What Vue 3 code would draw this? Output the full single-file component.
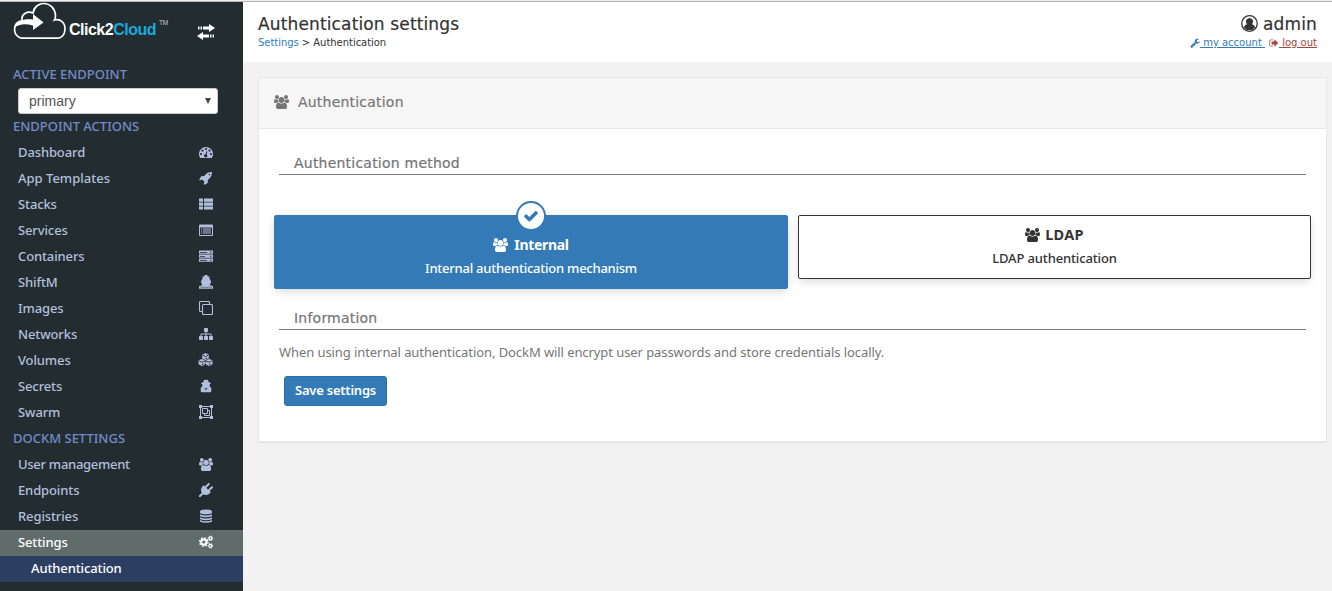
<script setup>
import { h } from 'vue'

const shapes = {
  users: '<path transform="scale(.0078125)" d="M593 896q-162 5-265 128h-134q-82 0-138-40.500t-56-118.500q0-353 124-353 6 0 43.500 21t97.500 42.500 119 21.500q67 0 133-23-5 37-5 66 0 139 81 256zm1071 637q0 120-73 189.500t-194 69.500h-874q-121 0-194-69.500t-73-189.500q0-53 3.500-103.500t14-109 26.500-108.500 43-97.500 62-81 85.500-53.500 111.500-20q10 0 43 21.500t73 48 107 48 135 21.500 135-21.500 107-48 73-48 43-21.500q61 0 111.500 20t85.500 53.500 62 81 43 97.500 26.500 108.500 14 109 3.500 103.500zm-1024-1277q0 106-75 181t-181 75-181-75-75-181 75-181 181-75 181 75 75 181zm704 384q0 159-112.500 271.500t-271.500 112.500-271.500-112.500-112.500-271.500 112.500-271.500 271.500-112.500 271.500 112.500 112.500 271.500zm576 225q0 78-56 118.500t-138 40.500h-134q-103-123-265-128 81-117 81-256 0-29-5-66 66 23 133 23 59 0 119-21.500t97.500-42.500 43.500-21q124 0 124 353zm-128-609q0 106-75 181t-181 75-181-75-75-181 75-181 181-75 181 75 75 181z"/>',
  check: '<path transform="scale(.0078125)" d="M1671 566q0 40-28 68l-724 724-136 136q-28 28-68 28t-68-28l-136-136-362-362q-28-28-28-68t28-68l136-136q28-28 68-28t68 28l294 295 656-657q28-28 68-28t68 28l136 136q28 28 28 68z"/>',
  sitemap: '<path transform="scale(.0078125)" d="M1792 1248v320q0 40-28 68t-68 28h-320q-40 0-68-28t-28-68v-320q0-40 28-68t68-28h96v-192h-512v192h96q40 0 68 28t28 68v320q0 40-28 68t-68 28h-320q-40 0-68-28t-28-68v-320q0-40 28-68t68-28h96v-192h-512v192h96q40 0 68 28t28 68v320q0 40-28 68t-68 28h-320q-40 0-68-28t-28-68v-320q0-40 28-68t68-28h96v-192q0-52 38-90t90-38h512v-192h-96q-40 0-68-28t-28-68v-320q0-40 28-68t68-28h320q40 0 68 28t28 68v320q0 40-28 68t-68 28h-96v192h512q52 0 90 38t38 90v192h96q40 0 68 28t28 68z"/>',
  wrench: '<path transform="scale(.0078125)" d="M448 1472q0-26-19-45t-45-19-45 19-19 45 19 45 45 19 45-19 19-45zm644-420l-682 682q-37 37-90 37-52 0-91-37l-106-108q-38-36-38-90 0-53 38-91l681-681q39 98 114.500 173.500t173.500 114.500zm634-435q0 39-23 106-47 134-164.500 217.500t-258.500 83.500q-185 0-316.500-131.500t-131.500-316.500 131.500-316.500 316.500-131.500q58 0 121.500 16.500t107.500 46.500q16 11 16 28t-16 28l-293 169v224l193 107q5-3 79-48.500t135.500-81 70.500-35.500q15 0 23.500 10t8.500 25z"/>',
  signout: '<path transform="scale(.0078125)" d="M704 1440q0 4 1 20t.5 26.500-3 23.500-10 19.500-20.500 6.500h-320q-119 0-203.500-84.500t-84.500-203.500v-704q0-119 84.500-203.500t203.500-84.500h320q13 0 22.500 9.500t9.500 22.500q0 4 1 20t.5 26.500-3 23.500-10 19.500-20.500 6.500h-320q-66 0-113 47t-47 113v704q0 66 47 113t113 47h312l11.500 1 11.500 3 8 5.500 7 9 2 13.500zm928-544q0 26-19 45l-544 544q-19 19-45 19t-45-19-19-45v-288h-448q-26 0-45-19t-19-45v-384q0-26 19-45t45-19h448v-288q0-26 19-45t45-19 45 19l544 544q19 19 19 45z"/>',
  rocket: '<path transform="scale(.0078125)" d="M1440 448q0-40-28-68t-68-28-68 28-28 68 28 68 68 28 68-28 28-68zm224-288q0 249-75.500 430.500t-253.500 360.500q-81 80-195 176l-20 379q-2 16-16 26l-384 224q-7 4-16 4-12 0-23-9l-64-64q-13-14-8-32l85-276-281-281-276 85q-3 1-9 1-14 0-23-9l-64-64q-17-19-5-39l224-384q10-14 26-16l379-20q96-114 176-195 188-187 358-258t431-71q14 0 24 9.500t10 22.500z"/>',
  plug: '<path transform="scale(.0078125)" d="M1755 453q37 38 37 90.500t-37 90.500l-401 400 150 150-160 160q-163 163-389.500 186.500t-411.500-100.500l-362 362h-181v-181l362-362q-124-185-100.500-411.500t186.500-389.500l160-160 150 150 400-401q38-37 91-37t90 37 37 90.500-37 90.500l-400 401 234 234 401-400q38-37 91-37t90 37z"/>',
  dashboard: '<path fill-rule="evenodd" d="M7 2a7 7 0 0 0-5.900 10.700q.2.300.6.300h10.600q.4 0 .6-.3A7 7 0 0 0 7 2zM2 8a1 1 0 1 0 .01 0zM3.500 4.500a1 1 0 1 0 .01 0zM7 3a1 1 0 1 0 .01 0zM10.500 4.500a1 1 0 1 0 .01 0zM12 8a1 1 0 1 0 .01 0zM7.400 6.200l-.8 3a1.600 1.600 0 1 0 1 .3l.7-3z"/>',
  list: '<path d="M0 1.500h4v3.300H0zM5 1.500h9v3.300H5zM0 5.500h4v3.200H0zM5 5.500h9v3.200H5zM0 9.400h4v3.200H0zM5 9.400h9v3.200H5z"/>',
  listalt: '<path fill-rule="evenodd" d="M1 1.500h12q1 0 1 1V12q0 1-1 1H1q-1 0-1-1V2.500q0-1 1-1zM1 4.500V12h12V4.500zM2 5.500h1.200v1H2zM4 5.500h8v1H4zM2 7.500h1.200v1H2zM4 7.500h8v1H4zM2 9.500h1.200v1H2zM4 9.500h8v1H4z"/>',
  server: '<path fill-rule="evenodd" d="M0 1.500h14v3.300H0zM1 2.900v.8h7v-.8zM11 2.700v1h1.500v-1zM0 5.600h14v3.200H0zM1 7v.8h5V7zM11 6.700v1h1.500v-1zM0 9.600h14v3.200H0zM1 11v.8h7V11zM11 10.700v1h1.500v-1z"/>',
  ship: '<path d="M5.500 0h3v1.500h2V4l1.200.9-.3 1 .9.700L10.800 10q1 1.300 2.100.5l1.100 1v2.200H0v-2.200l1.100-1q1.100.8 2.100-.5L1.700 6.600l.9-.7-.3-1L3.500 4V1.500h2z"/><path d="M1 12.300q1-1 2 0t2 0 2 0 2 0 2 0 2 0" fill="none" stroke="#232d31" stroke-width=".5"/>',
  clone: '<path fill="none" stroke="currentColor" stroke-width="1.100" d="M4.500 3.500h8q1 0 1 1v8q0 1-1 1h-8q-1 0-1-1v-8q0-1 1-1zM3.500 10.500h-2q-1 0-1-1v-8q0-1 1-1h8q1 0 1 1v2"/>',
  cubes: '<g fill="currentColor" stroke="#232d31" stroke-width=".35"><path d="M7.500 0l3.500 1.500v4L7.500 7.200 4 5.500v-4zM4 5.700l3.500 1.600v4L4 13.200.3 11.300v-4zM11 5.700l3.700 1.600v4L11 13.200l-3.500-1.900v-4z"/><path d="M4.300 2l3.200 1.500L10.700 2M.7 7.800L4 9.300l3.300-1.500M7.700 7.800L11 9.300l3.300-1.500" stroke-width=".9" fill="none"/><path d="M8.300 4.600v1.500M4.800 10.400v1.500M11.800 10.400v1.500" stroke-width="1.100"/></g>',
  secret: '<path fill-rule="evenodd" d="M5 1q1-.6 2 0 1-.6 2 0l.8 2.200L12 4v.8h-1L10.500 7l1.800 2v3q0 1.300-1.300 1.300H3Q1.700 13.300 1.700 12V9l1.800-2L3 4.800H2V4l2.200-.8zM5.600 8.500l.7 3 .6-2zM8.400 8.500L7.100 9.500l.6 2z"/>',
  group: '<path fill="none" stroke="currentColor" d="M2 1.500h10M2 12.500h10M1.500 2v10M12.500 2v10M3.500 3.500h5v5h-5zM8.500 5.500h2v5h-5v-2"/><path d="M0 0h3v3H0zM11 0h3v3h-3zM0 11h3v3H0zM11 11h3v3h-3z"/>',
  database: '<path d="M1 2.500q0-2 6-2t6 2v1q0 1.800-6 1.800T1 3.500zM1 5.200q2 1.200 6 1.200t6-1.200v1.400q0 1.700-6 1.700T1 6.600zM1 8.200q2 1.200 6 1.200t6-1.200v1.300q0 1.700-6 1.700T1 9.500zM1 11.100q2 1.200 6 1.200t6-1.200v1q0 1.700-6 1.700t-6-1.700z"/>',
  cogs: '<g fill="none" stroke="currentColor"><circle cx="4.800" cy="7" r="2.700" stroke-width="2.200"/><circle cx="4.800" cy="7" r="4.200" stroke-width="1.400" stroke-dasharray="1.650 1.650"/><circle cx="11.500" cy="3.300" r="1.500" stroke-width="1.300"/><circle cx="11.500" cy="3.300" r="2.300" stroke-width=".9" stroke-dasharray="1.030 1.030"/><circle cx="11.500" cy="10.800" r="1.500" stroke-width="1.300"/><circle cx="11.500" cy="10.800" r="2.300" stroke-width=".9" stroke-dasharray="1.030 1.030"/></g>',
  person: '<circle cx="7" cy="7" r="6.400" fill="none" stroke="currentColor" stroke-width="1.050"/><path d="M7 2.400a3.100 3.100 0 0 1 2.100 5.300q2.200.4 2.500 2.500Q9.900 12.400 7 12.400t-4.600-2.200q.3-2.100 2.500-2.500A3.100 3.100 0 0 1 7 2.400z"/>',
  exchange: '<path d="M6 2.500h6V0l6 4-6 4V5.500H6zM1 2.500h1.500v3H1zM3.500 2.500H5v3H3.500zM12 10.500H6V8l-6 4 6 4v-2.500h6zM13 10.500h1.500v3H13zM15.500 10.500H17v3h-1.500z"/>',
}

const boxes = { users: '0 0 15 14', cubes: '0 0 15 14', exchange: '0 0 18 16' }
const Icon = (props) =>
  h('svg', {
    viewBox: boxes[props.name] || '0 0 14 14',
    fill: 'currentColor',
    innerHTML: shapes[props.name],
  })
Icon.props = ['name']

const actions = [
  ['Dashboard', 'dashboard'],
  ['App Templates', 'rocket'],
  ['Stacks', 'list'],
  ['Services', 'listalt'],
  ['Containers', 'server'],
  ['ShiftM', 'ship'],
  ['Images', 'clone'],
  ['Networks', 'sitemap'],
  ['Volumes', 'cubes'],
  ['Secrets', 'secret'],
  ['Swarm', 'group'],
]
const settings = [
  ['User management', 'users'],
  ['Endpoints', 'plug'],
  ['Registries', 'database'],
  ['Settings', 'cogs'],
]
</script>

<template>
  <div class="page">
    <aside class="sidebar">
      <div class="brand">
        <svg class="cloud" viewBox="0 0 54 40">
          <path d="M8 37.200C-1 34-.5 21.500 9 19.500 8 12.500 15 9.500 20 12 22-1 41-1 42.500 14c0 2-.3 4-1 5 6-2 11 3.500 10.500 9.500-.4 6-4 8.700-8 8.700H8" fill="none" stroke="#fff" stroke-width="1.700" />
          <path d="M1 26C5 18.500 12 17.500 20 18.500V13l10.500 8.500L20 29v-4.500C12 22.500 6 23 1 27z" fill="#fff" />
        </svg>
        <span class="wordmark">Click2<b>Cloud</b></span><span class="tm">TM</span>
        <Icon class="toggle" name="exchange" />
      </div>
      <div class="title">ACTIVE ENDPOINT</div>
      <div class="select"><span>primary</span><i></i></div>
      <div class="title">ENDPOINT ACTIONS</div>
      <a v-for="[label, icon] in actions" :key="label" class="item" :class="'row-' + icon">
        <span>{{ label }}</span><Icon class="nav-icon" :class="icon" :name="icon" />
      </a>
      <div class="title">DOCKM SETTINGS</div>
      <a v-for="[label, icon] in settings" :key="label" class="item" :class="['row-' + icon, { active: label === 'Settings' }]">
        <span>{{ label }}</span><Icon class="nav-icon" :class="icon" :name="icon" />
      </a>
      <a class="item sub"><span>Authentication</span></a>
    </aside>

    <main class="content">
      <header class="header">
        <div>
          <h1>Authentication settings</h1>
          <p class="crumbs"><a>Settings</a> &gt; Authentication</p>
        </div>
        <div class="user">
          <div class="name"><Icon class="avatar" name="person" /><span>admin</span></div>
          <div class="links">
            <a class="account"><Icon name="wrench" /><u>&nbsp;my account&nbsp;</u></a>
            <a class="logout"><Icon name="signout" /><u>&nbsp;log out</u></a>
          </div>
        </div>
      </header>

      <section class="widget">
        <div class="widget-head"><Icon class="group-icon" name="users" /><span>Authentication</span></div>
        <div class="widget-body">
          <h2>Authentication method</h2>
          <div class="boxes">
            <div class="box selected">
              <div class="badge"><Icon name="check" /></div>
              <strong><Icon class="group-icon" name="users" /><span>Internal</span></strong>
              <p>Internal authentication mechanism</p>
            </div>
            <div class="box ldap">
              <strong><Icon class="group-icon" name="users" /><span>LDAP</span></strong>
              <p>LDAP authentication</p>
            </div>
          </div>
          <h2>Information</h2>
          <p class="note">When using internal authentication, DockM will encrypt user passwords and store credentials locally.</p>
          <button>Save settings</button>
        </div>
      </section>
    </main>
  </div>
</template>

<style>
body { background: #f2f2f2; overflow: hidden; }
</style>

<style scoped>
* { box-sizing: border-box; }
svg { display: block; flex: none; }
h1, h2, p { margin: 0; font-weight: 400; }
.page { display: flex; height: 591px; border-top: 1px solid #f1f1f1; font-family: "Noto Sans", "Open Sans", sans-serif; font-size: 13px; color: #333; }
.page::before { content: ""; position: absolute; top: 1px; left: 0; right: 0; height: 1px; background: #b4b4b4; }
.sidebar { width: 243px; background: #232d31; padding-top: 1px; }
.brand { height: 60px; display: flex; align-items: flex-start; padding-left: 13px; }
.cloud { width: 54px; height: 40px; margin-top: -1px; }
.wordmark { margin: 16px 0 0 2px; font: bold 16px/24px "Liberation Sans", sans-serif; letter-spacing: -.5px; color: #fff; }
.wordmark b { color: #19a9df; }
.tm { margin: 17px 0 0 3px; font: 6.5px/8px "Liberation Sans", sans-serif; letter-spacing: -.3px; color: #ccc; }
.toggle { width: 18px; height: 16px; margin: 22px 28px 0 auto; color: #fff; }
.title { height: 26px; padding-left: 13px; line-height: 24px; color: #738bc8; font-weight: 500; letter-spacing: 0; }
.select { display: flex; align-items: center; justify-content: space-between; width: 200px; height: 26px; margin-left: 18px; padding: 0 6px 0 10px; background: #fff; border: 1px solid #ccc; border-radius: 3px; color: #555; font: 14px "Liberation Sans", sans-serif; }
.select i { border: 3.5px solid transparent; border-top: 6px solid #444; border-bottom: 0; }
.item { display: flex; align-items: center; justify-content: space-between; height: 26px; padding: 0 30px 2px 18px; color: #b2bfdc; font-weight: 500; letter-spacing: -.12px; }
.row-rocket { letter-spacing: 0; }
.row-users { letter-spacing: -.28px; }
.nav-icon { width: 14px; height: 14px; }
.nav-icon.users { height: 13px; }
.nav-icon.cubes { width: 15px; }
.item.active { background: #606c6a; color: #fff; }
.item.sub { background: #2d3e63; color: #fff; padding-left: 31px; }
.content { flex: 1; padding-top: 1px; }
.header { display: flex; justify-content: space-between; height: 60px; background: #fff; padding: 9px 15px 0 15px; }
h1, .name, h2, .widget-head span { -webkit-text-stroke: .2px currentColor; }
h1 { height: 25px; font: 17px/26px "DejaVu Sans", sans-serif; letter-spacing: .14px; }
.crumbs { font: 10px/14px "DejaVu Sans", sans-serif; letter-spacing: -.04px; }
.crumbs a, .account { color: #337ab7; }
.name { display: flex; justify-content: flex-end; align-items: center; height: 25px; font: 17px/26px "DejaVu Sans", sans-serif; letter-spacing: .14px; gap: 5px; }
.avatar { width: 17px; height: 17px; }
.links { display: flex; gap: 4px; font: 10px/14px "DejaVu Sans", sans-serif; }
.links a { display: flex; align-items: center; }
.links svg { width: 10px; height: 10px; }
.logout { color: #a94442; }
.widget { width: 1069px; height: 365px; margin: 15px 0 0 15px; background: #fff; border: 1px solid #e7e7e7; box-shadow: 0 1px 1px rgba(0, 0, 0, .05); }
.widget-head { display: flex; align-items: center; height: 51px; gap: 9px; padding: 0 15px 2px; background: #f6f6f6; border-bottom: 1px solid #e7e7e7; color: #767676; font: 14px "DejaVu Sans", sans-serif; letter-spacing: .21px; }
.group-icon { width: 15px; height: 14px; }
.widget-body { padding: 22px 15px 0; color: #767676; }
h2 { height: 24px; margin: 0 5px; padding-left: 15px; border-bottom: 1px solid #777; font: 14px/24px "DejaVu Sans", sans-serif; letter-spacing: .22px; }
.boxes { display: grid; grid-template-columns: 514px 513px; gap: 10px; align-items: start; margin-top: 40px; height: 91px; }
.box { position: relative; display: flex; flex-direction: column; align-items: center; height: 64px; padding-top: 8px; border: 1px solid #333; border-radius: 2px; color: #333; box-shadow: 0 3px 10px -2px rgba(0, 0, 0, .2); }
.box strong { display: flex; align-items: center; gap: 6px; height: 22px; font-size: 14px; letter-spacing: -.3px; }
.box p { line-height: 24px; font-weight: 500; letter-spacing: -.24px; }
.box.ldap strong { gap: 5px; font-size: 14.5px; letter-spacing: .3px; }
.box.ldap p { letter-spacing: -.14px; }
.selected { height: 74px; padding-top: 18px; background: #337ab7; border-color: #337ab7; color: #fff; }
.box strong span { margin-top: -2px; }
.badge { position: absolute; top: -15px; left: 241px; width: 30px; height: 30px; padding: 5px; border: 2px solid #337ab7; border-radius: 50%; background: #fff; color: #337ab7; }
.badge svg { width: 16px; height: 16px; }
.note { margin: 10px 5px 0; line-height: 24px; letter-spacing: -.08px; }
button { display: block; height: 30px; width: 103px; margin: 12px 0 0 10px; padding: 0 0 2px; background: #337ab7; border: 1px solid #2e6da4; border-radius: 3px; color: #fff; font: 600 13px "Noto Sans", sans-serif; letter-spacing: -.22px; white-space: nowrap; }
</style>
